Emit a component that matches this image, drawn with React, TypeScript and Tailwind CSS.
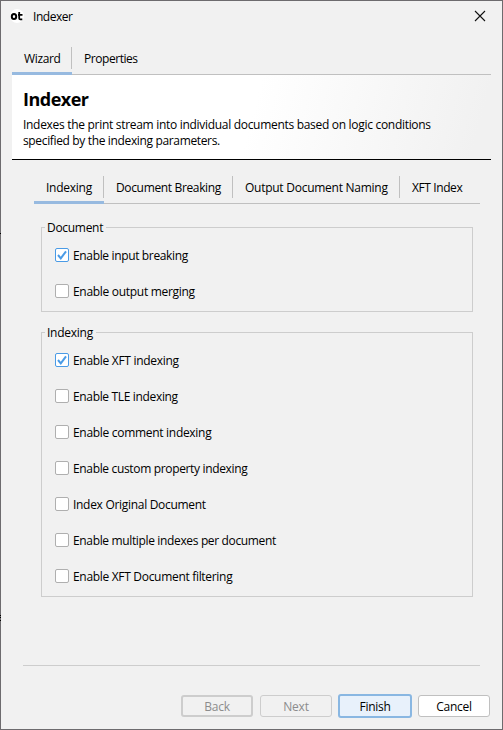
import React from "react";

type TabItem = { label: string; width: string; tracking: string };

const outerTabs: TabItem[] = [
  { label: "Wizard", width: "w-[60px]", tracking: "tracking-[-0.35px]" },
  { label: "Properties", width: "w-[80px]", tracking: "tracking-[-0.45px]" },
];

const innerTabs: TabItem[] = [
  { label: "Indexing", width: "w-[70px]", tracking: "tracking-[-0.25px]" },
  { label: "Document Breaking", width: "w-[129px]", tracking: "tracking-[-0.35px]" },
  { label: "Output Document Naming", width: "w-[167px]", tracking: "tracking-[-0.26px]" },
  { label: "XFT Index", width: "w-[80px]", tracking: "tracking-[-0.4px]" },
];

function Tabs({ items }: { items: TabItem[] }) {
  return (
    <div className="flex h-[31px] bg-[linear-gradient(#c0c0c0,#c0c0c0)] bg-[length:100%_1px] bg-[position:0_30px] bg-no-repeat">
      {items.map((t, i) => (
        <div key={t.label} className={`${t.width} flex h-full shrink-0 flex-col justify-between`}>
          <div
            className={`${t.tracking} mt-[3px] h-[22px] whitespace-nowrap pl-3 leading-[23px] ${i < items.length - 1 ? "border-r border-[#c0c0c0]" : ""}`}
          >
            {t.label}
          </div>
          {i === 0 && <div className="h-[3px] bg-[#97bae0]" />}
        </div>
      ))}
    </div>
  );
}

type Option = { label: string; checked?: boolean; tracking: string };

const documentOptions: Option[] = [
  { label: "Enable input breaking", checked: true, tracking: "tracking-[-0.35px]" },
  { label: "Enable output merging", tracking: "tracking-[-0.3px]" },
];

const indexingOptions: Option[] = [
  { label: "Enable XFT indexing", checked: true, tracking: "tracking-[-0.3px]" },
  { label: "Enable TLE indexing", tracking: "tracking-[-0.34px]" },
  { label: "Enable comment indexing", tracking: "tracking-[-0.3px]" },
  { label: "Enable custom property indexing", tracking: "tracking-[-0.34px]" },
  { label: "Index Original Document", tracking: "tracking-[-0.3px]" },
  { label: "Enable multiple indexes per document", tracking: "tracking-[-0.35px]" },
  { label: "Enable XFT Document filtering", tracking: "tracking-[-0.31px]" },
];

function Group({ title, titleClass, options, height }: { title: string; titleClass: string; options: Option[]; height: string }) {
  return (
    <section className={`${height} w-[432px] border border-[#cdcdcd]`}>
      <div className={`${titleClass} -mt-[9px] ml-[3px] h-[16px] whitespace-nowrap bg-[#f1f1f1] pl-[2px] leading-[18px]`}>
        {title}
      </div>
      <div className="mt-[13px] flex flex-col gap-[22px] pl-[13px]">
        {options.map((o) => (
          <div key={o.label} className="flex h-[14px] items-center gap-1">
            <span
              className={`flex size-[14px] shrink-0 items-center justify-center rounded-[2px] border bg-white ${o.checked ? "border-[#4a9be6]" : "border-[#afafaf]"}`}
            >
              {o.checked && (
                <svg width="12" height="12" viewBox="0 0 12 12" fill="none">
                  <path d="M2 6 4.8 9.3 10 2.3" stroke="#4a9be6" strokeWidth="2" />
                </svg>
              )}
            </span>
            <span className={`${o.tracking} mt-[2px] whitespace-nowrap leading-4`}>{o.label}</span>
          </div>
        ))}
      </div>
    </section>
  );
}

export default function App() {
  return (
    <div className="relative flex h-[730px] w-[503px] flex-col border border-[#6d6b6e] bg-[#f1f1f1] font-['Open_Sans','Noto_Sans',sans-serif] text-[12px] text-black">
      <i className="absolute -left-px top-[232px] h-px w-px bg-black" />
      <i className="absolute -left-px top-[614px] h-px w-px bg-black" />
      <i className="absolute -left-px top-[616px] h-px w-px bg-black" />
      <i className="absolute -left-px top-[619px] h-px w-px bg-black" />
      <header className="flex h-[43px] items-start pl-[9px] pr-[16px]">
        <span className="mt-2 flex h-[14px] w-[14px] items-center justify-center rounded-full bg-white">
          <svg width="14" height="14" viewBox="0 0 14 14" className="shrink-0" fill="none" stroke="black">
            <ellipse cx="4" cy="7.5" rx="2.2" ry="2.5" strokeWidth="2" />
            <path d="M9.2 3V9.2Q9.2 10.3 10.3 10.3H12.3M8 5.8H12.5" strokeWidth="1.8" />
          </svg>
        </span>
        <h2 className="ml-[9px] mt-[8px] leading-4 tracking-[-0.45px]">Indexer</h2>
        <svg className="ml-auto mt-[9px]" width="12" height="12" viewBox="0 0 12 12" stroke="#111" strokeWidth="1.1">
          <path d="M1 1 11 11M11 1 1 11" />
        </svg>
      </header>

      <main className="flex flex-col px-[11px]">
        <Tabs items={outerTabs} />
        <section className="h-[85px] w-[479px] border-b border-black bg-[linear-gradient(105deg,#fff_50%,#f1f1f1_96%)] pl-[11px] pt-[12px]">
          <h1 className="text-[18px] font-bold leading-6 tracking-[-0.5px]">Indexer</h1>
          <p className="mt-[6px] whitespace-nowrap leading-4 tracking-[-0.3px]">Indexes the print stream into individual documents based on logic conditions</p>
          <p className="whitespace-nowrap leading-4 tracking-[-0.35px]">specified by the indexing parameters.</p>
        </section>

        <div className="ml-[22px] mt-[13px] w-[446px]">
          <Tabs items={innerTabs} />
        </div>

        <div className="ml-[29px] mt-[23px] flex flex-col gap-[20px]">
          <Group title="Document" titleClass="w-[61px] tracking-[-0.3px]" options={documentOptions} height="h-[85px]" />
          <Group title="Indexing" titleClass="w-[51px] tracking-[-0.25px]" options={indexingOptions} height="h-[265px]" />
        </div>

        <hr className="ml-[11px] mt-[68px] w-[457px] border-[#cdcdcd]" />

        <footer className="mt-[28px] flex h-6 items-center justify-end gap-[6px] pr-px">
          <button className="mr-px h-[22px] w-[72px] rounded-[3px] border-2 border-[#cdcdcd] pt-px leading-[18px] text-[#8c8c8c] tracking-[-0.3px]">Back</button>
          <button className="h-[22px] w-[72px] rounded-[3px] border border-[#cdcdcd] pt-px leading-5 text-[#8c8c8c] tracking-[-0.2px]">Next</button>
          <button className="h-6 w-[74px] rounded-[3px] border-2 border-[#89b7e2] bg-[#e8f1fb] pt-px leading-5 tracking-[-0.3px]">Finish</button>
          <button className="h-[22px] w-[72px] rounded-[3px] border border-[#c0c0c0] bg-white pt-px leading-5 tracking-[-0.25px]">Cancel</button>
        </footer>
      </main>
    </div>
  );
}
